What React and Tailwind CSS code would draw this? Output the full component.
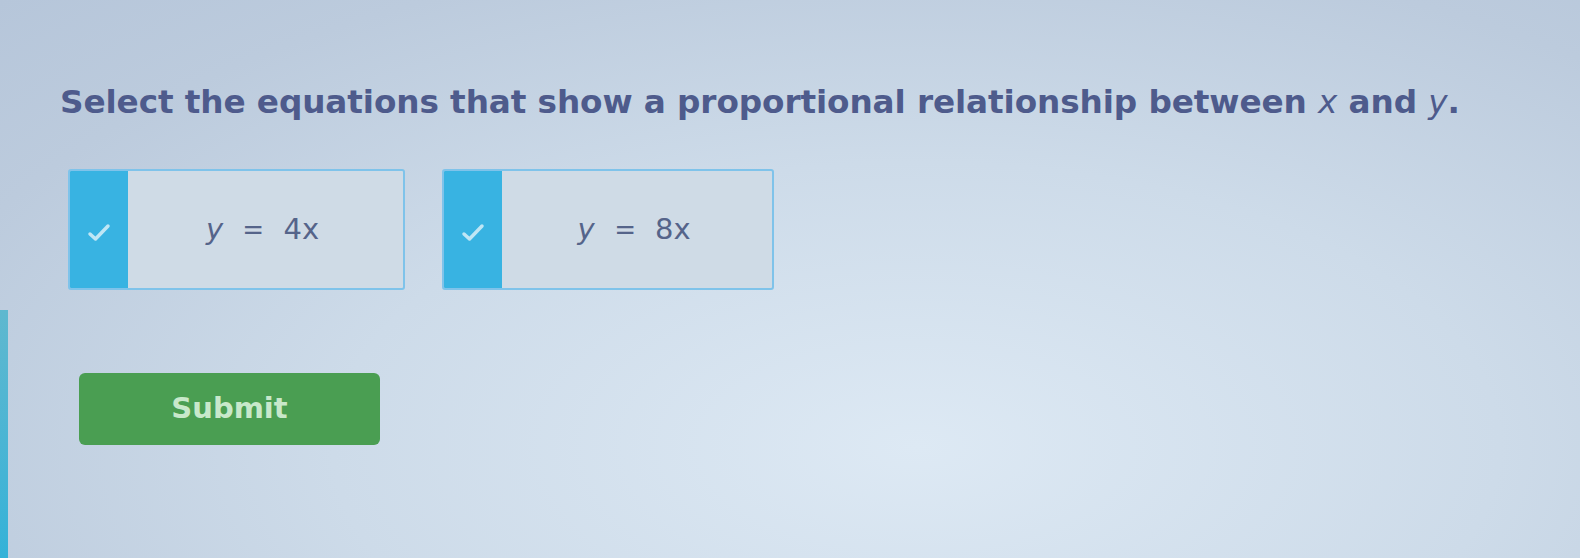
import React from "react";

function Check() {
  return (
    <svg width="26" height="22" viewBox="0 0 26 22" fill="none">
      <path d="M4 13 L9.5 18 L22 5" stroke="#bfe6f5" strokeWidth="3.5" strokeLinecap="round" strokeLinejoin="round" />
    </svg>
  );
}

function Choice({ coef, w }) {
  return (
    <div className={`flex h-[121px] ${w} rounded-[3px] border-2 border-[#7fc3ea] bg-[#cfdbe6] overflow-hidden`}>
      <div className="w-[58px] bg-[#38b3e2] flex items-center justify-center pt-[4px]">
        <Check />
      </div>
      <div className="flex-1 flex items-center justify-center text-[29px] text-[#55648a] font-['DejaVu_Sans',sans-serif] pr-[6px]">
        <span className="italic">y</span>
        <span className="mx-[18px] scale-x-90">=</span>
        <span>{coef}x</span>
      </div>
    </div>
  );
}

export default function App() {
  return (
    <div className="w-full h-[558px] flex overflow-hidden bg-[radial-gradient(ellipse_at_58%_80%,#dde9f4_0%,#cddbe9_45%,#bccbdd_80%,#b6c6da_100%)] font-['DejaVu_Sans',sans-serif]">
      <div className="w-[8px] mt-[310px] bg-gradient-to-b from-[#5fb8cf] to-[#33b2d8]" />
      <div className="flex flex-col pl-[52px] pt-[82px]">
        <h1 className="text-[32.7px] leading-[40px] font-bold text-[#4e5b8c] whitespace-nowrap tracking-[-0.1px]">
          Select the equations that show a proportional relationship between{" "}
          <span className="italic font-normal">x</span> and{" "}
          <span className="italic font-normal">y</span>.
        </h1>
        <div className="flex gap-[37px] mt-[47px] ml-[8px]">
          <Choice coef="4" w="w-[337px]" />
          <Choice coef="8" w="w-[332px]" />
        </div>
        <button className="mt-[83px] ml-[19px] w-[301px] h-[72px] rounded-[6px] bg-[#4a9e52] text-[#c8e8ca] text-[29px] font-bold flex items-center justify-center">
          Submit
        </button>
      </div>
    </div>
  );
}
